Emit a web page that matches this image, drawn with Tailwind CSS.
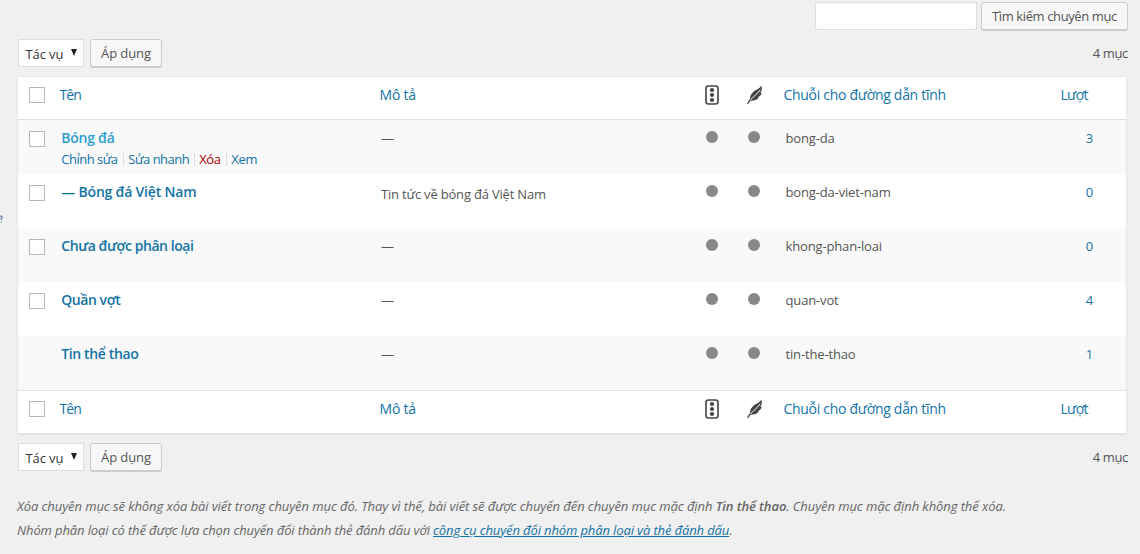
<!DOCTYPE html>
<html lang="vi">
<head>
<meta charset="utf-8">
<title>Chuyên mục</title>
<script src="https://cdn.jsdelivr.net/npm/@tailwindcss/browser@4"></script>
</head>
<body class="bg-[#f0f0f0] w-[1140px] h-[554px] overflow-hidden relative font-['Open_Sans','Noto_Sans',sans-serif] text-[13px] leading-[20px] text-[#555] whitespace-nowrap">
<svg width="0" height="0" class="absolute">
  <symbol id="light" viewBox="0 0 14 20"><rect x="1" y="1" width="12" height="18" rx="2.5" fill="none" stroke="#444" stroke-width="1.6"/><circle cx="7" cy="5" r="2.1" fill="#444"/><circle cx="7" cy="10" r="2.1" fill="#444"/><circle cx="7" cy="15" r="2.1" fill="#444"/></symbol>
  <symbol id="feather" viewBox="0 0 16 20"><path fill="#444" d="M14.300 .6C13 3.500 9 4.700 6.300 7C4 9 3 11.200 3 13.800L0 18.800L1 19.200L3.500 15.800C7 15.900 10 14.900 12 12.600L10.600 12.300C12.800 11.400 14.300 9.700 14.800 8L13.400 8.100C15 6 15.300 3.200 14.300 .6Z"/><path d="M3.500 15C6.500 11 9.800 9.800 13.300 4.800" fill="none" stroke="#fff" stroke-width="1"/></symbol>
</svg>
<svg class="absolute left-0 top-[215px]" width="4" height="8"><path d="M0 1.200C2 .6 2.600 2.500 1.200 4V5M1.200 6.500V7.500" fill="none" stroke="#6f82a6" stroke-width="1.3"/></svg>
<main class="pl-[17px]">
  <div class="flex h-[30px] pt-[2px] pl-[798px]">
    <input class="w-[162px] h-[28px] bg-white border border-[#ddd] shadow-[inset_0_1px_2px_rgba(0,0,0,0.05)]">
    <button class="ml-[4px] w-[147px] h-[28px] rounded-[3px] border border-[#ccc] bg-[#f7f7f7] shadow-[0_1px_0_#ccc]"><span class="tracking-[-0.39px]">Tìm kiếm chuyên mục</span></button>
  </div>
  <div class="flex h-[46px] pt-[9px]">
    <div class="ml-px w-[66px] h-[28px] bg-white border border-[#ddd] pl-[6.500px] flex items-center text-[#32373c]"><span class="pt-px w-[38px] tracking-[-0.1px]">Tác vụ</span><svg class="ml-[7.500px] mb-[2px]" width="6" height="7"><path d="M0 0H6L3 7Z" fill="#222"/></svg></div>
    <button class="ml-[6px] w-[72px] h-[28px] rounded-[3px] border border-[#ccc] bg-[#f7f7f7] shadow-[0_1px_0_#ccc]"><span class="tracking-[-0.1px]">Áp dụng</span></button>
    <div class="ml-auto mr-[12px] pt-[4px]"><span class="tracking-[-0.35px]">4 mục</span></div>
  </div>
  <section class="w-[1110px] h-[358px] border border-[#e5e5e5] bg-white shadow-[0_1px_1px_rgba(0,0,0,0.04)]">
    <div class="flex h-[43px] border-b border-[#e1e1e1] text-[14px] text-[#1273a6] pt-[8px]">
      <div class="w-[41px] pl-[11px] pt-[2px]"><div class="size-[16px] border border-[#b4b9be] bg-white"></div></div>
      <div class="w-[320px] pl-[0.500px]"><span class="tracking-[-0.9px]">Tên</span></div>
      <div class="w-[308px] pl-[0.500px]"><span class="tracking-[-0.2px]">Mô tả</span></div>
      <svg class="ml-[18px] w-[14px] h-[20px]"><use href="#light"/></svg>
      <svg class="ml-[28px] w-[16px] h-[20px]"><use href="#feather"/></svg>
      <div class="ml-[20px] w-[277px] pl-[0.500px]"><span class="tracking-[-0.3px]">Chuỗi cho đường dẫn tĩnh</span></div>
      <div class="pl-[0.500px]"><span class="tracking-[-0.7px]">Lượt</span></div>
    </div>
    <div id="rows"></div>
    <div class="flex h-[43px] border-t border-[#e1e1e1] text-[14px] text-[#1273a6] pt-[8px]">
      <div class="w-[41px] pl-[11px] pt-[2px]"><div class="size-[16px] border border-[#b4b9be] bg-white"></div></div>
      <div class="w-[320px] pl-[0.500px]"><span class="tracking-[-0.9px]">Tên</span></div>
      <div class="w-[308px] pl-[0.500px]"><span class="tracking-[-0.2px]">Mô tả</span></div>
      <svg class="ml-[18px] w-[14px] h-[20px]"><use href="#light"/></svg>
      <svg class="ml-[28px] w-[16px] h-[20px]"><use href="#feather"/></svg>
      <div class="ml-[20px] w-[277px] pl-[0.500px]"><span class="tracking-[-0.3px]">Chuỗi cho đường dẫn tĩnh</span></div>
      <div class="pl-[0.500px]"><span class="tracking-[-0.7px]">Lượt</span></div>
    </div>
  </section>
  <div class="flex h-[46px] pt-[9px]">
    <div class="ml-px w-[66px] h-[28px] bg-white border border-[#ddd] pl-[6.500px] flex items-center text-[#32373c]"><span class="pt-px w-[38px] tracking-[-0.1px]">Tác vụ</span><svg class="ml-[7.500px] mb-[2px]" width="6" height="7"><path d="M0 0H6L3 7Z" fill="#222"/></svg></div>
    <button class="ml-[6px] w-[72px] h-[28px] rounded-[3px] border border-[#ccc] bg-[#f7f7f7] shadow-[0_1px_0_#ccc]"><span class="tracking-[-0.1px]">Áp dụng</span></button>
    <div class="ml-auto mr-[12px] pt-[4px]"><span class="tracking-[-0.35px]">4 mục</span></div>
  </div>
  <div class="pt-[14px] italic text-[#666] leading-[24px]">
    <p class="tracking-[-0.078px]">Xóa chuyên mục sẽ không xóa bài viết trong chuyên mục đó. Thay vì thế, bài viết sẽ được chuyển đến chuyên mục mặc định <b class="font-semibold">Tin thể thao</b>. Chuyên mục mặc định không thể xóa.</p>
    <p class="tracking-[-0.12px]">Nhóm phân loại có thể được lựa chọn chuyển đổi thành thẻ đánh dấu với <a class="text-[#1273a6] underline">công cụ chuyển đổi nhóm phân loại và thẻ đánh dấu</a>.</p>
  </div>
</main>
<script>
const rows = [
  ['Bóng đá', '—', 'bong-da', 3, 'tracking-[-0.25px]'],
  ['— Bóng đá Việt Nam', 'Tin tức về bóng đá Việt Nam', 'bong-da-viet-nam', 0, 'tracking-[-0.2px]'],
  ['Chưa được phân loại', '—', 'khong-phan-loai', 0, 'tracking-[-0.45px]'],
  ['Quần vợt', '—', 'quan-vot', 4, 'tracking-[-0.45px]'],
  ['Tin thể thao', '—', 'tin-the-thao', 1, 'tracking-[-0.38px]']
];
document.getElementById('rows').innerHTML = rows.map((r, i) => `
<div class="flex h-[54px] pt-[8px] ${i % 2 ? 'bg-white' : 'bg-[#f9f9f9]'}">
  <div class="w-[43px] pl-[11px] pt-[3px]">${i < 4 ? '<div class="size-[16px] border border-[#b4b9be] bg-white"></div>' : ''}</div>
  <div class="w-[320px] pl-[0.300px]"><div class="text-[14px] font-semibold ${i ? 'text-[#1273a6]' : 'text-[#2e9fd0]'}"><span class="${r[4]}">${r[0]}</span></div>
  ${i ? '' : '<div class="flex gap-[4px] text-[#1273a6] pt-[1px] tracking-[-0.5px]"><span class="w-[58px]">Chỉnh sửa</span><i class="w-px h-[13px] mt-[4px] bg-[#ddd]"></i><span class="w-[62px]">Sửa nhanh</span><i class="w-px h-[13px] mt-[4px] bg-[#ddd]"></i><span class="w-[23px] text-[#a00]">Xóa</span><i class="w-px h-[13px] mt-[4px] bg-[#ddd]"></i><span class="tracking-[-0.3px]">Xem</span></div>'}</div>
  <div class="w-[306px] ${i === 1 ? 'pt-[2px]' : ''}"><span class="tracking-[-0.19px]">${r[1]}</span></div>
  <div class="ml-[19px] mt-[3px] size-[12px] rounded-full bg-[#888]"></div>
  <div class="ml-[30px] mt-[3px] size-[12px] rounded-full bg-[#888]"></div>
  <div class="ml-[25px] w-[280px] pl-[0.500px]"><span class="tracking-[-0.15px]">${r[2]}</span></div>
  <div class="w-[49px] text-center text-[#1273a6]"><span>${r[3]}</span></div>
</div>`).join('');
</script>
</body>
</html>
